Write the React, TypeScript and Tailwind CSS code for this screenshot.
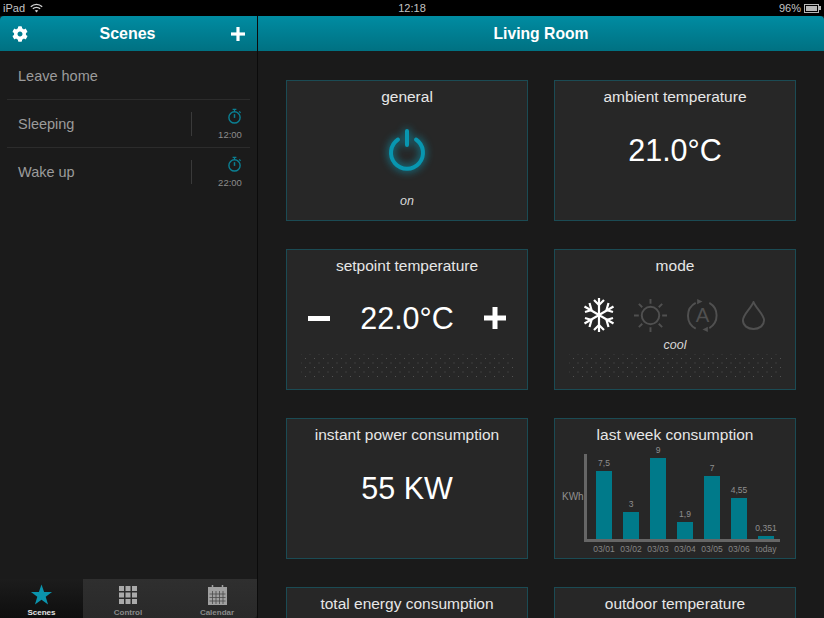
import type { ReactNode } from "react";
import { FaCog } from "react-icons/fa";

const bars = [
  { value: "7,5", date: "03/01", height: "h-[68px]" },
  { value: "3", date: "03/02", height: "h-[27px]" },
  { value: "9", date: "03/03", height: "h-[81px]" },
  { value: "1,9", date: "03/04", height: "h-[17px]" },
  { value: "7", date: "03/05", height: "h-[63px]" },
  { value: "4,55", date: "03/06", height: "h-[41px]" },
  { value: "0,351", date: "today", height: "h-[3px]" },
];

function Plus({ className }: { className?: string }) {
  return (
    <svg viewBox="0 0 22 22" className={className} fill="currentColor">
      <rect x="8.5" y="0" width="5" height="22" />
      <rect x="0" y="8.5" width="22" height="5" />
    </svg>
  );
}

function Timer() {
  return (
    <svg viewBox="0 0 16 18" className="w-[15px] h-[17px] text-[#0b7f92]" fill="none" stroke="currentColor">
      <circle cx="8" cy="10" r="6" strokeWidth="1.5" />
      <path d="M8 6.5V10.5" strokeWidth="1.6" />
      <path d="M6 1.5H10M8 1.5V4M13 3.5L14.5 5" strokeWidth="1.3" />
    </svg>
  );
}

function SceneRow({ name, time }: { name: string; time?: string }) {
  return (
    <div className="h-12 mx-[7px] pl-[11px] pr-[8px] flex items-center border-b border-[#2c2c2c] last:border-b-transparent text-[14.5px] text-[#9c9c9c]">
      <span className="flex-1 mt-[3px]">{name}</span>
      {time && (
        <div className="flex items-center">
          <div className="w-px h-6 bg-[#3a3a3a] mr-[26px]" />
          <div className="w-6 flex flex-col items-center -mt-[2px]">
            <div className="ml-[9px] mt-[2px]">
              <Timer />
            </div>
            <span className="text-[9.5px] leading-[11px] text-[#8c8c8c] mt-[4px]">{time}</span>
          </div>
        </div>
      )}
    </div>
  );
}

function Tab({ label, width, active, children }: { label: string; width: string; active?: boolean; children: ReactNode }) {
  return (
    <div
      className={`${width} shrink-0 flex flex-col items-center pt-[4px] ${
        active ? "bg-gradient-to-b from-[#1c1c1c] to-[#0e0e0e]" : ""
      }`}
    >
      <div className="h-[23px] flex items-center justify-center">{children}</div>
      <span className={`text-[8px] leading-[10px] mt-[2px] font-bold ${active ? "text-[#e4e4e4]" : "text-[#8a8a8a]"}`}>
        {label}
      </span>
    </div>
  );
}

function Card({ title, children }: { title: string; children?: ReactNode }) {
  return (
    <div className="h-[141px] border border-[#1b4b54] bg-[#272727] flex flex-col items-center pt-[6px]">
      <div className="text-[15.5px] leading-[20px] text-[#e6e6e6]">{title}</div>
      {children}
    </div>
  );
}

function Dots() {
  return (
    <div className="w-[212px] h-[26px] bg-[radial-gradient(circle,#525252_0.7px,transparent_1px),radial-gradient(circle,#525252_0.7px,transparent_1px)] bg-[size:9px_9px] bg-[position:0_0,4.5px_4.5px]" />
  );
}

function Chart() {
  return (
    <div className="flex self-start ml-[7px] mt-[9px]">
      <div className="w-[22px] pt-[37px] text-[10px] leading-[12px] text-[#8f8f8f]">KWh</div>
      <div>
        <div className="w-[196px] h-[88px] border-l-[3px] border-b-[3px] border-[#666666] flex items-end pl-[9px] gap-[11px]">
          {bars.map((b) => (
            <div key={b.date} className="w-4 flex flex-col items-center">
              <span className="text-[8.5px] leading-[10px] mb-[3px] text-[#8f8f8f] whitespace-nowrap">{b.value}</span>
              <div className={`w-4 bg-[#007a8a] ${b.height}`} />
            </div>
          ))}
        </div>
        <div className="flex pl-[12px] gap-[11px] mt-[2px]">
          {bars.map((b) => (
            <div key={b.date} className="w-4 flex justify-center">
              <span className="text-[8.5px] leading-[11px] text-[#858585] whitespace-nowrap">{b.date}</span>
            </div>
          ))}
        </div>
      </div>
    </div>
  );
}

export default function App() {
  return (
    <div className="w-[824px] h-[618px] overflow-hidden bg-black flex flex-col font-['Liberation_Sans',Arial,sans-serif]">
      {/* status bar */}
      <div className="h-4 shrink-0 px-[3px] grid grid-cols-[1fr_auto_1fr] items-center text-[11px] text-[#c4c4c4]">
        <div className="flex items-center">
          <span>iPad</span>
          <svg viewBox="0 0 16 12" className="w-[13px] h-[10px] ml-[5px]" fill="none" stroke="#d0d0d0" strokeWidth="1.7">
            <path d="M1 4.5C5 0.5 11 0.5 15 4.5" />
            <path d="M3.5 7C6 4.8 10 4.8 12.5 7" />
            <path d="M8 11.5L5.8 9.2C7 8.2 9 8.2 10.2 9.2Z" fill="#d0d0d0" stroke="none" />
          </svg>
        </div>
        <span>12:18</span>
        <div className="flex items-center justify-end">
          <span>96%</span>
          <div className="ml-[3px] w-[15px] h-[9px] border border-[#b8b8b8] p-[1px] flex">
            <div className="flex-1 bg-[#b8b8b8]" />
          </div>
          <div className="w-[2px] h-[4px] bg-[#b8b8b8]" />
        </div>
      </div>

      <div className="flex-1 flex min-h-0">
        {/* scenes sidebar */}
        <aside className="w-[257px] shrink-0 flex flex-col bg-[#1b1b1b]">
          <header className="h-[35px] shrink-0 rounded-tl-[4px] bg-gradient-to-b from-[#008ca2] to-[#007182] flex items-center justify-between px-[12px] text-white">
            <FaCog className="w-4 h-4" />
            <span className="text-[16px] font-bold -ml-[4px]">Scenes</span>
            <Plus className="w-[14px] h-[14px]" />
          </header>
          <div className="flex-1 pt-px">
            <SceneRow name="Leave home" />
            <SceneRow name="Sleeping" time="12:00" />
            <SceneRow name="Wake up" time="22:00" />
          </div>
          <nav className="h-[39px] shrink-0 flex overflow-hidden rounded-br-[4px] bg-gradient-to-b from-[#2f2f2f] to-[#292929]">
            <Tab label="Scenes" width="w-[83px]" active>
              <svg viewBox="0 0 24 23" className="w-[21px] h-[21px]" fill="#0b94ad">
                <path d="M12 0L15 8.5H24L16.8 14L19.5 23L12 17.5L4.5 23L7.2 14L0 8.5H9Z" />
              </svg>
            </Tab>
            <Tab label="Control" width="w-[90px]">
              <svg viewBox="0 0 18 18" className="w-[18px] h-[18px]" fill="#aaaaaa">
                {[0, 6.5, 13].map((y) =>
                  [0, 6.5, 13].map((x) => <rect key={`${x}-${y}`} x={x} y={y} width="5" height="5" />)
                )}
              </svg>
            </Tab>
            <Tab label="Calendar" width="w-[88px]">
              <svg viewBox="0 0 19 20" className="w-[19px] h-[20px]" fill="none">
                <rect x="0" y="2" width="19" height="18" fill="#a0a0a0" />
                <path d="M4.5 0V4M14.5 0V4" stroke="#a0a0a0" strokeWidth="1.5" />
                <path d="M1.5 9H17.5M1.5 12.5H17.5M1.5 16H17.5M4.5 6V19M8 6V19M11.5 6V19M15 6V19" stroke="#4a4a4a" strokeWidth="0.8" />
              </svg>
            </Tab>
          </nav>
        </aside>

        <div className="w-px shrink-0 bg-[#0b0b0b]" />

        {/* living room */}
        <main className="flex-1 flex flex-col min-w-0 bg-[#1a1a1a]">
          <header className="h-[35px] shrink-0 rounded-tr-[4px] bg-gradient-to-b from-[#008ca2] to-[#007182] flex items-center justify-center text-[15.7px] font-bold text-white">
            Living Room
          </header>
          <div className="grid grid-cols-[242px_242px] auto-rows-[141px] gap-x-[26px] gap-y-[28px] pl-[28px] pt-[29px]">
            <Card title="general">
              <svg viewBox="0 0 60 60" className="w-[60px] h-[60px] mt-[14px] drop-shadow-[0_0_4px_#0a9fbb]" fill="none" stroke="#0896b0" strokeWidth="4" strokeLinecap="round">
                <path d="M21 18.5A16 16 0 1 0 39 18.5" />
                <path d="M30 10V24" />
              </svg>
              <span className="text-[12.5px] italic text-[#d8d8d8] mt-[11px]">on</span>
            </Card>
            <Card title="ambient temperature">
              <div className="text-[30.5px] leading-[36px] text-white mt-[25px]">21.0°C</div>
            </Card>
            <Card title="setpoint temperature">
              <div className="w-full flex items-center justify-between px-[21px] mt-[24px] text-white">
                <div className="w-[22px] h-[5px] bg-white" />
                <span className="text-[30.5px] leading-[36px]">22.0°C</span>
                <Plus className="w-[22px] h-[22px]" />
              </div>
              <div className="mt-[18px]">
                <Dots />
              </div>
            </Card>
            <Card title="mode">
              <div className="flex items-center mt-[21px] -ml-[2px] gap-[18px] text-[#505050]">
                <svg viewBox="0 0 32 36" className="w-[32px] h-[36px] text-white" fill="none" stroke="currentColor" strokeWidth="2.2">
                  <path d="M16 1V35M1.5 9.5L30.5 26.5M30.5 9.5L1.5 26.5" />
                  <path d="M11 3L16 8L21 3M11 33L16 28L21 33M2 15L8.5 13L6.5 6M30 15L23.5 13L25.5 6M2 21L8.5 23L6.5 30M30 21L23.5 23L25.5 30" />
                </svg>
                <svg viewBox="0 0 36 36" className="w-[35px] h-[35px]" fill="none" stroke="currentColor" strokeWidth="2">
                  <circle cx="18" cy="18" r="9" />
                  <path d="M18 1V6M18 30V35M1 18H6M30 18H35M6 6L9.5 9.5M26.5 26.5L30 30M30 6L26.5 9.5M9.5 26.5L6 30" />
                </svg>
                <svg viewBox="0 0 34 36" className="w-[33px] h-[35px]" fill="none" stroke="currentColor" strokeWidth="2">
                  <path d="M10 5A15 15 0 0 0 10 31.5" />
                  <path d="M24 31A15 15 0 0 0 24 5" />
                  <path d="M17 3.5L11.5 1V6.5ZM17 32.5L22.5 35V29.5Z" fill="currentColor" stroke="none" />
                  <text x="17" y="25" textAnchor="middle" fontSize="21" fill="currentColor" stroke="none" fontFamily="Liberation Sans">A</text>
                </svg>
                <svg viewBox="0 0 26 30" className="w-[25px] h-[29px] ml-[4px]" fill="none" stroke="currentColor" strokeWidth="2">
                  <path d="M13 1C10 8 2 14 2 20C2 25.5 7 29 13 29C19 29 24 25.5 24 20C24 14 16 8 13 1Z" />
                </svg>
              </div>
              <span className="text-[12.5px] leading-[14px] italic text-[#d8d8d8] mt-[5px]">cool</span>
              <div className="mt-[2px]">
                <Dots />
              </div>
            </Card>
            <Card title="instant power consumption">
              <div className="text-[30.5px] leading-[36px] text-white mt-[25px]">55 KW</div>
            </Card>
            <Card title="last week consumption">
              <Chart />
            </Card>
            <Card title="total energy consumption" />
            <Card title="outdoor temperature" />
          </div>
        </main>
      </div>
    </div>
  );
}
